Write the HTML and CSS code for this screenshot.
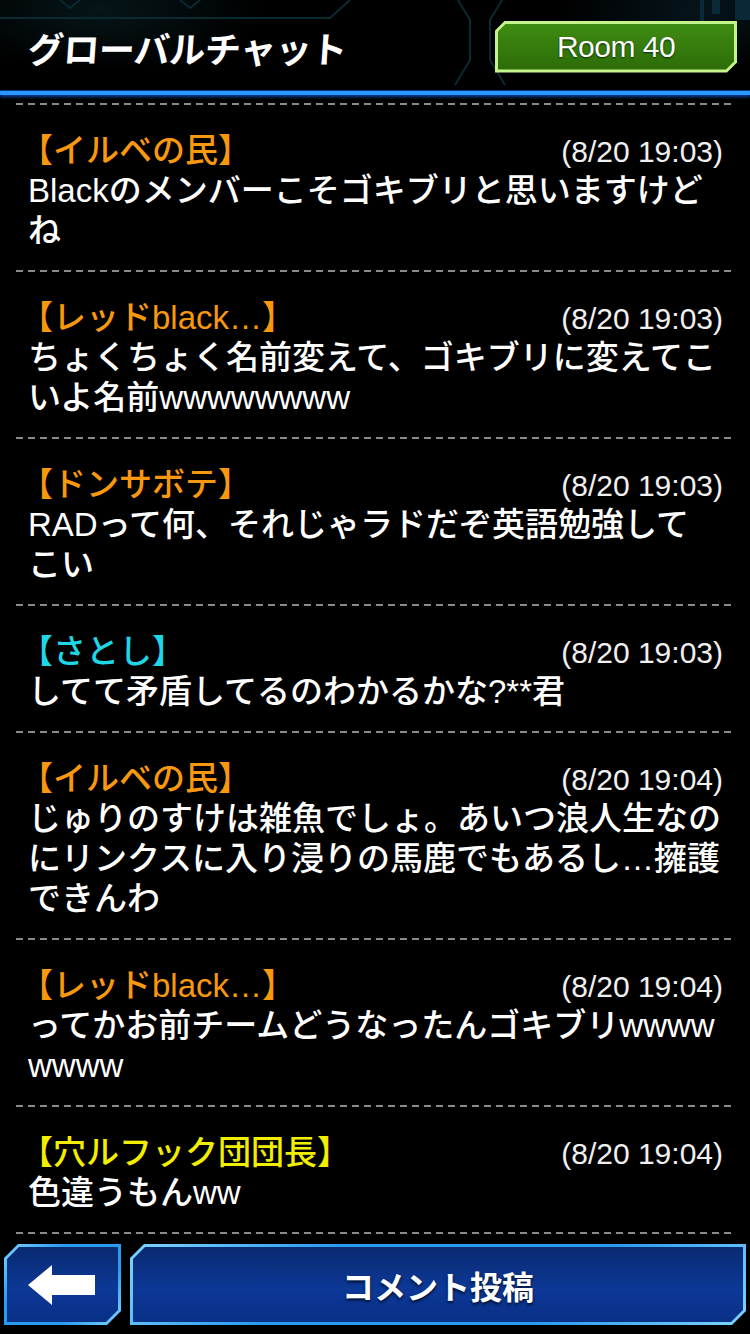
FILE: index.html
```html
<!DOCTYPE html>
<html lang="ja">
<head>
<meta charset="utf-8">
<title>グローバルチャット</title>
<link rel="stylesheet" href="styles.css">
</head>
<body>
<header class="header">
  <svg class="deco" width="750" height="94" viewBox="0 0 750 94">
    <g fill="none" stroke="#0a2a32" stroke-width="2">
      <path d="M0 18 H330 L350 0"/>
      <path d="M455 -5 L470 20 L470 60 L455 85"/>
      <path d="M505 -5 L490 20 L490 60 L505 85"/>
      <path d="M60 0 L70 8 L80 0"/>
      <path d="M180 0 L190 8 L200 0"/>
    </g>
    <g fill="#0b3040" opacity="0.8">
      <rect x="700" y="0" width="4" height="30"/>
      <rect x="712" y="0" width="8" height="14"/>
      <rect x="735" y="0" width="15" height="20"/>
    </g>
  </svg>
  <h1 class="title">グローバルチャット</h1>
  <div class="room">
    <div class="room-inner">Room 40</div>
  </div>
</header>

<main class="list">
  <div class="sep"></div>
  <article class="msg">
    <div class="meta"><span class="name orange">【イルベの民】</span><span class="time">(8/20 19:03)</span></div>
    <p class="text">Blackのメンバーこそゴキブリと思いますけど<br>ね</p>
  </article>
  <div class="sep"></div>
  <article class="msg">
    <div class="meta"><span class="name orange">【レッドblack…】</span><span class="time">(8/20 19:03)</span></div>
    <p class="text">ちょくちょく名前変えて、ゴキブリに変えてこ<br>いよ名前wwwwwwww</p>
  </article>
  <div class="sep"></div>
  <article class="msg">
    <div class="meta"><span class="name orange">【ドンサボテ】</span><span class="time">(8/20 19:03)</span></div>
    <p class="text">RADって何、それじゃラドだぞ英語勉強して<br>こい</p>
  </article>
  <div class="sep"></div>
  <article class="msg">
    <div class="meta"><span class="name cyan">【さとし】</span><span class="time">(8/20 19:03)</span></div>
    <p class="text">してて矛盾してるのわかるかな?**君</p>
  </article>
  <div class="sep"></div>
  <article class="msg">
    <div class="meta"><span class="name orange">【イルベの民】</span><span class="time">(8/20 19:04)</span></div>
    <p class="text">じゅりのすけは雑魚でしょ。あいつ浪人生なの<br>にリンクスに入り浸りの馬鹿でもあるし…擁護<br>できんわ</p>
  </article>
  <div class="sep"></div>
  <article class="msg">
    <div class="meta"><span class="name orange">【レッドblack…】</span><span class="time">(8/20 19:04)</span></div>
    <p class="text">ってかお前チームどうなったんゴキブリwwww<br>wwww</p>
  </article>
  <div class="sep"></div>
  <article class="msg">
    <div class="meta"><span class="name yellow">【穴ルフック団団長】</span><span class="time">(8/20 19:04)</span></div>
    <p class="text">色違うもんww</p>
  </article>
  <div class="sep"></div>
</main>

<footer class="footer">
  <div class="btn back">
    <div class="btn-inner">
      <svg width="68" height="40" viewBox="0 0 68 40">
        <path d="M0 20 L24 0 L24 10 L67 10 L67 30 L24 30 L24 40 Z" fill="#fff"/>
      </svg>
    </div>
  </div>
  <div class="btn post">
    <div class="btn-inner">コメント投稿</div>
  </div>
</footer>
</body>
</html>
```

FILE: styles.css
```css
html, body {
  margin: 0;
  padding: 0;
}
body {
  width: 750px;
  height: 1334px;
  overflow: hidden;
  background: #000;
  color: #fff;
  font-family: "Liberation Sans", "Noto Sans CJK JP", sans-serif;
  display: flex;
  flex-direction: column;
}

/* header */
.header {
  position: relative;
  height: 91px;
  flex: none;
  display: flex;
  align-items: center;
  justify-content: space-between;
  padding: 0 13px 0 28px;
  background:
    radial-gradient(ellipse 160px 60px at 100px 10px, rgba(20,70,80,0.3), transparent),
    radial-gradient(ellipse 140px 60px at 700px 10px, rgba(20,70,90,0.3), transparent),
    #000;
  border-bottom: 4px solid #2a96ff;
  box-shadow: 0 2px 3px #0b3f9a, 0 -1px 0 #0c3c80 inset;
  margin-bottom: 8px;
}
.deco {
  position: absolute;
  left: 0;
  top: 0;
}
.title {
  position: relative;
  margin: 0;
  font-family: "Noto Sans CJK JP", sans-serif;
  font-weight: 700;
  font-size: 36px;
  letter-spacing: -0.5px;
  line-height: 1;
  margin-top: 2px;
  transform: skewX(-4deg);
}
.room {
  position: relative;
  width: 242px;
  height: 52px;
  margin-top: 2px;
  background: #c6f48c;
  clip-path: polygon(10px 0, 100% 0, 100% calc(100% - 10px), calc(100% - 10px) 100%, 0 100%, 0 10px);
}
.room-inner {
  position: absolute;
  inset: 3px;
  background: linear-gradient(#3f8c12, #2c6c08);
  clip-path: polygon(8px 0, 100% 0, 100% calc(100% - 8px), calc(100% - 8px) 100%, 0 100%, 0 8px);
  display: flex;
  align-items: center;
  justify-content: center;
  font-size: 30px;
  letter-spacing: -0.5px;
  color: #fff;
  text-shadow: 0 1px 2px #0a2a00;
}

/* list */
.list {
  flex: none;
  padding: 0 16px;
}
.sep {
  height: 2px;
  background: repeating-linear-gradient(90deg, #8a8a8a 0 7px, transparent 7px 12px);
}
.msg {
  padding: 26px 12px 19px 12px;
}
.meta {
  display: flex;
  justify-content: space-between;
  align-items: baseline;
  height: 40px;
  line-height: 40px;
}
.name {
  font-size: 33px;
  font-weight: 500;
  margin-left: -8px;
  white-space: nowrap;
}
.orange { color: #f8980e; }
.cyan { color: #1fd6e6; }
.yellow { color: #f2ee00; }
.time {
  font-size: 30px;
  color: #f0f0f0;
  margin-right: -1px;
}
.text {
  margin: 0;
  font-size: 33px;
  font-weight: 500;
  line-height: 40px;
  white-space: nowrap;
}

/* footer */
.footer {
  flex: none;
  display: flex;
  gap: 9px;
  padding: 0 4px;
  margin-top: 10px;
  height: 81px;
}
.btn {
  position: relative;
  height: 81px;
  background: linear-gradient(135deg, #7fd4ff, #2a9cf0 30%, #2a9cf0 70%, #7fd4ff);
  clip-path: polygon(14px 0, 100% 0, 100% calc(100% - 14px), calc(100% - 14px) 100%, 0 100%, 0 14px);
}
.back { width: 117px; }
.post { flex: 1; }
.btn-inner {
  position: absolute;
  inset: 3px;
  background: linear-gradient(#0a2a70, #0c3896 55%, #0a3088);
  clip-path: polygon(12px 0, 100% 0, 100% calc(100% - 12px), calc(100% - 12px) 100%, 0 100%, 0 12px);
  display: flex;
  align-items: center;
  justify-content: center;
  font-family: "Noto Sans CJK JP", sans-serif;
  font-weight: 700;
  font-size: 32px;
  color: #fff;
  text-shadow: 0 2px 3px #001030;
}
.back .btn-inner {
  justify-content: flex-start;
  padding-left: 21px;
}
```
